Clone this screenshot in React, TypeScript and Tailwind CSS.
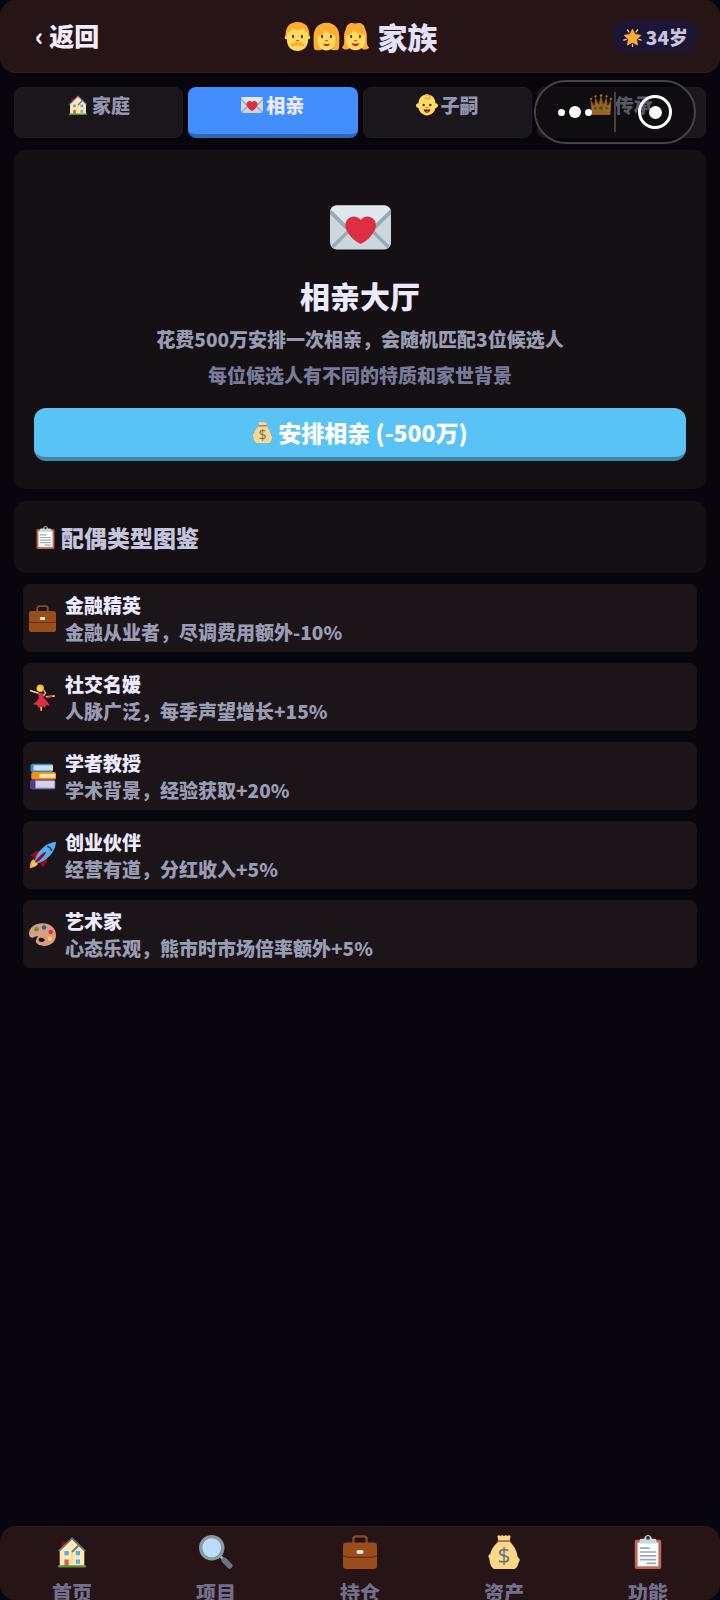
import { useState } from "react";
import type { ReactNode } from "react";

type IconProps = { className?: string };

function Svg({ className, children }: { className?: string; children: ReactNode }) {
  return (
    <svg viewBox="0 0 36 36" className={className} aria-hidden="true">
      {children}
    </svg>
  );
}

const LetterIcon = ({ className }: IconProps) => (
  <Svg className={className}>
    <rect y="5" width="36" height="26" rx="4" fill="#CCD6DD" />
    <path
      fill="#99AAB5"
      d="M11.95 17.636L.637 28.949c-.027.028-.037.063-.06.091.34.57.814 1.043 1.384 1.384.029-.023.063-.033.09-.059L13.365 19.05c.39-.391.39-1.023 0-1.414-.391-.391-1.024-.391-1.415 0M35.423 29.04c-.021-.028-.033-.063-.06-.09L24.051 17.636c-.392-.391-1.024-.391-1.415 0-.391.392-.391 1.024 0 1.414l11.313 11.314c.026.026.062.037.09.06.571-.34 1.044-.814 1.384-1.384"
    />
    <path
      fill="#99AAB5"
      d="M32 5H4C1.791 5 0 6.791 0 9v1.03l14.528 14.496c1.894 1.893 4.988 1.893 6.884 0L36 10.009V9c0-2.209-1.791-4-4-4z"
    />
    <path
      fill="#E1E8ED"
      d="M32 5H4C2.412 5 1.051 5.934.405 7.275l14.766 14.767c1.562 1.562 4.096 1.562 5.657 0L35.595 7.275C34.949 5.934 33.589 5 32 5z"
    />
    <path
      fill="#DD2E44"
      transform="translate(9 10.5) scale(.505)"
      d="M35.885 11.833c0-5.45-4.418-9.868-9.867-9.868-3.308 0-6.227 1.633-8.018 4.129-1.791-2.496-4.71-4.129-8.017-4.129-5.45 0-9.868 4.417-9.868 9.868 0 .772.098 1.52.266 2.241C1.751 22.587 11.216 31.568 18 34.034c6.783-2.466 16.249-11.447 17.617-19.959.17-.721.268-1.469.268-2.242z"
    />
  </Svg>
);

const HouseIcon = ({ className }: IconProps) => (
  <Svg className={className}>
    <path fill="#A0041E" d="M7 7h4v7H7z" />
    <path fill="#FFE8B6" d="M5 16 18 3.500 31 16v17H5z" />
    <path fill="#FFCC4D" d="M17.500 18h1v15h-1z" />
    <path fill="none" stroke="#66757F" strokeWidth="2" strokeLinecap="round" strokeLinejoin="round" d="M4.500 16.500 18 3.500l13.500 13M18.500 17.500l6-6" />
    <path fill="#55ACEE" d="M10 17h4.500v4.500H10zM22 17h4.500v4.500H22zM22 26h4.500v4.500H22z" />
    <path fill="#C1694F" d="M10 26h4.500v7H10z" />
    <rect x="3" y="32" width="30" height="2.500" rx="1.200" fill="#5C913B" />
  </Svg>
);

const SearchIcon = ({ className }: IconProps) => (
  <Svg className={className}>
    <path stroke="#99AAB5" strokeWidth="3" d="m21 21 5 5" />
    <path stroke="#66757F" strokeWidth="6" strokeLinecap="round" d="m27 27 5.500 5.500" />
    <circle cx="13.500" cy="13.500" r="13.500" fill="#8899A6" />
    <circle cx="13.500" cy="13.500" r="10" fill="#BBDDF5" />
  </Svg>
);

const BriefcaseIcon = ({ className }: IconProps) => (
  <Svg className={className}>
    <path fill="none" stroke="#8A4B20" strokeWidth="2.500" d="M11 9V4.500q0-3 3-3h8q3 0 3 3V9" />
    <rect y="8" width="36" height="28" rx="3.500" fill="#9A4E1C" />
    <path fill="#662113" d="M0 21.500q2 1.500 5 1.500h26q3 0 5-1.500v1q-2 1.500-5 1.500H5q-3 0-5-1.500z" />
    <rect x="14.500" y="16" width="7" height="4" rx="1.500" fill="#E1E8ED" />
  </Svg>
);

const MoneyBagIcon = ({ className }: IconProps) => (
  <Svg className={className}>
    <path
      fill="#FDD888"
      d="M12 7C7 12 4.500 15.500 3.500 20 1.500 20.500.7 23 2.500 25c.3 5 2 11 6 11h19c4 0 5.500-4.500 6-7 2-2 1-5-1-5.500C31.500 16 28 11 24 7z"
    />
    <path fill="#FDD888" d="M11 1q1.500-1.500 3 0 2-1.700 4 0 2-1.700 4 0 1.500-1.500 3 0L24 6H12z" />
    <rect x="11" y="5.500" width="14" height="2" rx="1" fill="#BF6952" />
    <text x="18" y="30" textAnchor="middle" fontFamily="Open Sans, sans-serif" fontSize="24" fontWeight="500" fill="#67757F">
      $
    </text>
  </Svg>
);

const ClipboardIcon = ({ className }: IconProps) => (
  <Svg className={className}>
    <rect x="4" y="5" width="28" height="31" rx="2" fill="#C1694F" />
    <path fill="#FFF" d="M7 8h22v25H7z" />
    <path fill="#CCD6DD" d="M9 9V6q0-2 2-2h3q1-4 4-4t4 4h3q2 0 2 2v3z" />
    <circle cx="18" cy="3" r="2" fill="#292F33" />
    <path stroke="#99AAB5" strokeWidth="1.800" strokeLinecap="round" d="M10 14h9M10 18h16M10 22h16M10 26h16M17 30h9" />
  </Svg>
);

const Features = () => (
  <>
    <ellipse cx="12.500" cy="18" rx="1.300" ry="2.200" fill="#662113" />
    <ellipse cx="23.500" cy="18" rx="1.300" ry="2.200" fill="#662113" />
    <path stroke="#C1694F" strokeWidth="1.500" strokeLinecap="round" d="M16.500 23h3" />
  </>
);

const ManIcon = ({ className }: IconProps) => (
  <Svg className={className}>
    <circle cx="5" cy="19" r="2.800" fill="#FFDC5D" />
    <circle cx="31" cy="19" r="2.800" fill="#FFDC5D" />
    <path fill="#FFAC33" d="M3.500 18C2 6 9 0 18 0s16 6 14.500 18z" />
    <path fill="#FFDC5D" d="M5 14c3-1 5-3 7-6 4 3 10 2 14 0 1 3 3 5 5 6v9c0 8-6 13-13 13S5 31 5 23z" />
    <path fill="#FFAC33" d="M18 25.500c-4-.8-8 .5-9 4 3 1 6 1 9-.5 3 1.500 6 1.500 9 .5-1-3.500-5-4.800-9-4z" />
    <Features />
  </Svg>
);

const WomanIcon = ({ className }: IconProps) => (
  <Svg className={className}>
    <path fill="#FFAC33" d="M18 1C7 1 2 9 2 19c0 8 0 12 1 15 5 2 9 1 11-1h8c2 2 6 3 11 1 1-3 1-7 1-15C34 9 29 1 18 1z" />
    <path fill="#FFDC5D" d="M7 18c5-1 8-4 10-8 3 4 7 6 12 7v6c0 7-5 12.500-11 12.500S7 30 7 23z" />
    <Features />
    <path fill="#DF1F32" d="M13.500 27q4.500.8 9 0-1 3-4.500 3t-4.500-3z" />
  </Svg>
);

const GirlIcon = ({ className }: IconProps) => (
  <Svg className={className}>
    <path
      fill="#FFAC33"
      d="M18 2c-4-2-11-1-12 7-3 5-2 11-2 15 0 4-1 6-3 8 3 3 8 3 10 0h14c2 3 7 3 10 0-2-2-3-4-3-8 0-4 1-10-2-15-1-8-8-9-12-7z"
    />
    <path fill="#FFDC5D" d="M6 17c5-1 8-4 10-7 3 4 8 6 14 6v7c0 7-5 12-12 12S6 30 6 23z" />
    <Features />
    <path fill="#DF1F32" d="M13 26.500q5 .8 10 0-1 3.500-5 3.500t-5-3.500z" />
  </Svg>
);

const BabyIcon = ({ className }: IconProps) => (
  <Svg className={className}>
    <path fill="#FFDC5D" d="M18 1C9 1 5 7 4 15c-3 0-4 2-4 4s2 4 4 4c2 8 8 12 14 12s12-4 14-12c2 0 4-2 4-4s-1-4-4-4C31 7 27 1 18 1z" />
    <path fill="none" stroke="#E39F3D" strokeWidth="2" strokeLinecap="round" d="M15 2c2-2 8-1 8 3s-7 4-8 1" />
    <circle cx="12.500" cy="18" r="2" fill="#662113" />
    <circle cx="23.500" cy="18" r="2" fill="#662113" />
    <path stroke="#C1694F" strokeWidth="1.500" strokeLinecap="round" d="M16.500 22h3" />
    <path fill="#662113" d="M12.500 25q5.500 1 11 0-1 5.500-5.500 5.500T12.500 25z" />
    <path fill="#E8596E" d="M15.500 29q2.500-2 5 0-2.500 2-5 0z" />
  </Svg>
);

const CrownIcon = ({ className }: IconProps) => (
  <Svg className={className}>
    <path fill="#F4900C" d="M3 34 1 9l6 10L9 5l5 12 4-15 4 15 5-12 2 14 6-10-2 25z" />
    <path fill="#FFAC33" d="M3 34 2 16l6 5 3-8 4 7 3-10 3 10 4-7 3 8 6-5-1 18z" />
    <g fill="#FFCC4D">
      <circle cx="1.800" cy="8" r="1.800" />
      <circle cx="9" cy="4" r="1.800" />
      <circle cx="18" cy="2.500" r="2" />
      <circle cx="27" cy="4" r="1.800" />
      <circle cx="34.200" cy="8" r="1.800" />
    </g>
    <circle cx="18" cy="23" r="3" fill="#5C913B" />
    <circle cx="9" cy="23" r="2.200" fill="#9266CC" />
    <circle cx="27" cy="23" r="2.200" fill="#9266CC" />
  </Svg>
);

const StarIcon = ({ className }: IconProps) => (
  <Svg className={className}>
    <path
      fill="#FFAC33"
      stroke="#FFAC33"
      strokeWidth="2"
      strokeLinejoin="round"
      d="m18 3 4.500 9.500L33 14l-7.500 7.300L27.300 32 18 26.800 8.700 32l1.800-10.700L3 14l10.500-1.500z"
    />
    <path
      stroke="#FFD983"
      strokeWidth="2.500"
      strokeLinecap="round"
      d="M8.500 3.500 11 7.500M27.500 3.500 25 7.500M1.500 23l4.500-1.500M34.500 23 30 21.500M18 31v4"
    />
  </Svg>
);

const DancerIcon = ({ className }: IconProps) => (
  <Svg className={className}>
    <path fill="none" stroke="#FFDC5D" strokeWidth="1.800" strokeLinecap="round" strokeLinejoin="round" d="m2 9 10 3 4 2 4 1 2-3-2-3M23 17l11-1" />
    <path stroke="#DD2E44" strokeWidth="2" d="m24 18 7-1.500" />
    <path fill="#FFDC5D" d="M15 30h2.500l-.5 6h-1.500z" />
    <circle cx="15" cy="5.500" r="5" fill="#FFAC33" />
    <circle cx="14.500" cy="6.500" r="3.200" fill="#FFDC5D" />
    <path fill="#DD2E44" d="M12 11c2 2 5 2 7 1l1 7c4 3 6 7 8 10l-5-1-2 4-4-3-4 3-2-4-6-1c4-2 6-5 8-8z" />
  </Svg>
);

const BooksIcon = ({ className }: IconProps) => (
  <Svg className={className}>
    <rect x="2" y="1" width="30" height="11" rx="2.500" fill="#3B88C3" />
    <path fill="#CFE0EC" d="M6 3h26v7H6z" />
    <rect x="3" y="12" width="33" height="10" rx="2.500" fill="#F4900C" />
    <path fill="#FFE8B6" d="M14 14.500h21v5H14z" />
    <rect x="2" y="22" width="33" height="13" rx="2.500" fill="#9266CC" />
    <path fill="#553788" d="M2 25q0-3 3-3h3v13H5q-3 0-3-3z" />
    <path fill="#CCD6DD" d="M9 24h25v9H9z" />
  </Svg>
);

const RocketIcon = ({ className }: IconProps) => (
  <Svg className={className}>
    <path fill="#A0041E" d="m2 18 7-6h10L9 22zM18 34l6-7V17L14 27z" />
    <path fill="#FFAC33" d="M1 35c0-6 2-11 5-12l6 6c-1 3-5 5-11 6z" />
    <path fill="#FFCC4D" d="M4 32c0-3 1-6 3-7l4 4c-1 2-4 3-7 3z" />
    <path fill="#55ACEE" d="M36 0S26 0 17 9c-7 7-9 13-9 16l3 3c3 0 9-2 16-9 9-9 9-19 9-19z" />
    <path fill="#A0041E" d="M8 27c-1-1 10-13 14-14 3 2-11 16-14 14z" />
    <path fill="none" stroke="#292F33" strokeWidth="2" d="M24 6c3 0 6 3 6 6" />
  </Svg>
);

const PaletteIcon = ({ className }: IconProps) => (
  <Svg className={className}>
    <path
      fill="#D99E82"
      d="M18 3C8 3 0 9 0 17c0 2 1 5 3 5 3 1 6-2 8-2 2 1-2 4-2 7 1 5 8 7 14 6 8-1 13-7 13-14C36 9 28 3 18 3zm-1 25c-3 0-5-2-4-4s3-2 6-1 3 5-2 5z"
    />
    <circle cx="10" cy="11" r="3" fill="#5C913B" />
    <circle cx="20" cy="8.500" r="3" fill="#226699" />
    <circle cx="29" cy="14.500" r="3" fill="#DD2E44" />
    <circle cx="28" cy="23.500" r="3" fill="#FFCC4D" />
  </Svg>
);

const tabs = [
  { label: "家庭", Icon: HouseIcon },
  { label: "相亲", Icon: LetterIcon },
  { label: "子嗣", Icon: BabyIcon },
  { label: "传承", Icon: CrownIcon },
];

const spouseTypes = [
  { name: "金融精英", desc: "金融从业者，尽调费用额外-10%", Icon: BriefcaseIcon },
  { name: "社交名媛", desc: "人脉广泛，每季声望增长+15%", Icon: DancerIcon },
  { name: "学者教授", desc: "学术背景，经验获取+20%", Icon: BooksIcon },
  { name: "创业伙伴", desc: "经营有道，分红收入+5%", Icon: RocketIcon },
  { name: "艺术家", desc: "心态乐观，熊市时市场倍率额外+5%", Icon: PaletteIcon },
];

const navItems = [
  { label: "首页", Icon: HouseIcon },
  { label: "项目", Icon: SearchIcon },
  { label: "持仓", Icon: BriefcaseIcon },
  { label: "资产", Icon: MoneyBagIcon },
  { label: "功能", Icon: ClipboardIcon },
];

const Header = () => (
  <header className="grid grid-cols-[1fr_auto_1fr] items-center rounded-2xl border-b border-[#2e1d24] bg-[#271417] px-[22px] pt-5 pb-5">
    <button type="button" className="justify-self-start pb-[2px] pl-[13px] text-[25px] leading-[30px] text-[#f4ecfa]">
      ‹ 返回
    </button>
    <h1 className="flex items-center gap-2 text-[30px] leading-8 text-[#e4e2f8]">
      <span className="flex">
        <ManIcon className="size-[29px]" />
        <WomanIcon className="size-[29px]" />
        <GirlIcon className="size-[29px]" />
      </span>
      家族
    </h1>
    <div className="flex items-center gap-1 justify-self-end rounded-full bg-[#1c1535] px-[10px] pt-[2px] text-[19px] leading-[30px] text-[#c6c4de]">
      <StarIcon className="size-[19px]" />
      34岁
    </div>
  </header>
);

// mini-program capsule floating above the page
const Capsule = () => (
  <div className="absolute top-[7px] right-6 flex h-16 w-[162px] items-center rounded-full border-2 border-[#464346] bg-black/40">
    <button type="button" aria-label="更多" className="flex flex-1 items-center justify-center gap-1">
      <span className="size-[7px] rounded-full bg-white" />
      <span className="size-3 rounded-full bg-white" />
      <span className="size-[7px] rounded-full bg-white" />
    </button>
    <span className="h-10 w-[2px] bg-[#464346]" />
    <button type="button" aria-label="关闭" className="flex flex-1 items-center justify-center">
      <span className="flex size-[34px] items-center justify-center rounded-full border-[3px] border-white">
        <span className="size-[13px] rounded-full bg-white" />
      </span>
    </button>
  </div>
);

const App = () => {
  const [activeTab, setActiveTab] = useState("相亲");

  return (
    <div className="flex min-h-screen flex-col bg-[#08060c] font-['Noto_Sans_CJK_SC',sans-serif] font-black">
      <Header />

      <div className="relative px-[14px] pt-[14px]">
        <div className="grid grid-cols-4 gap-[5px]">
          {tabs.map(({ label, Icon }) => (
            <button
              key={label}
              type="button"
              onClick={() => setActiveTab(label)}
              className={
                label === activeTab
                  ? "flex h-[51px] items-start justify-center gap-[3px] rounded-lg border-b-4 border-[#3068b8] bg-[#438eff] pt-1 text-[19px] leading-7 text-[#eceaff]"
                  : "flex h-[51px] items-start justify-center gap-[3px] rounded-lg border border-[#201b22] bg-[#1b161b] pt-[3px] text-[19px] leading-7 text-[#9496b0]"
              }
            >
              <Icon className="mt-[3px] size-[22px]" />
              {label}
            </button>
          ))}
        </div>
        <Capsule />
      </div>

      <main className="flex-1 px-[14px] pt-3">
        <section className="flex flex-col items-center rounded-xl bg-[#141014] px-5 pt-[47px] pb-7 text-center">
          <LetterIcon className="size-[61px]" />
          <h2 className="mt-[15px] text-[30px] leading-[44px] text-[#ebeaff]">相亲大厅</h2>
          <p className="mt-1 text-[19px] leading-9 text-[#9a9cb4]">花费500万安排一次相亲，会随机匹配3位候选人</p>
          <p className="text-[19px] leading-9 text-[#777a98]">每位候选人有不同的特质和家世背景</p>
          <button
            type="button"
            className="mt-[15px] flex h-[53px] w-full items-center justify-center gap-[5px] rounded-xl border-b-4 border-[#3f88ab] bg-[#5ac3f6] text-[23px] text-white"
          >
            <MoneyBagIcon className="size-[21px]" />
            安排相亲 (-500万)
          </button>
        </section>

        <section className="mt-3 flex items-center gap-1 rounded-xl bg-[#141014] px-5 py-5 text-[23px] leading-8 text-[#c4c4de]">
          <ClipboardIcon className="size-[23px]" />
          <h2>配偶类型图鉴</h2>
        </section>

        <ul className="mx-[9px] mt-[11px] flex flex-col gap-[11px]">
          {spouseTypes.map(({ name, desc, Icon }) => (
            <li key={name} className="flex items-center gap-[9px] rounded-lg bg-[#1b151a] px-[6px] py-[7px] text-[19px] leading-[27px]">
              <Icon className="size-[27px]" />
              <div>
                <h3 className="text-[#ebeaff]">{name}</h3>
                <p className="text-[#9a9cb4]">{desc}</p>
              </div>
            </li>
          ))}
        </ul>
      </main>

      <nav className="grid h-[74px] grid-cols-5 overflow-hidden rounded-2xl border-t border-[#2e1d24] bg-[#271417]">
        {navItems.map(({ label, Icon }) => (
          <button key={label} type="button" className="flex flex-col items-center pt-2 text-[20px] leading-7 text-[#73708f]">
            <Icon className="mb-[10px] size-[34px] shrink-0" />
            {label}
          </button>
        ))}
      </nav>
    </div>
  );
};

export default App;
